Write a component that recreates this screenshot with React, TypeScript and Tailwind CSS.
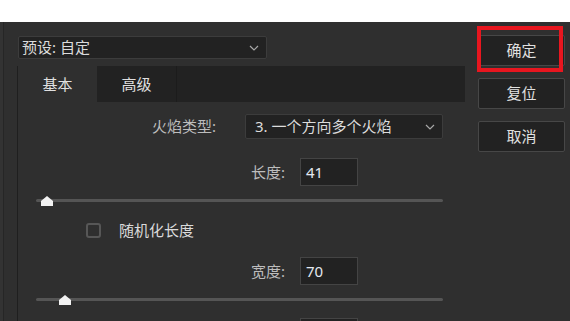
import { ReactNode } from "react";

const font = { fontFamily: '"Noto Sans", "Noto Sans CJK SC", sans-serif' };

function Chevron() {
  return (
    <svg width="10" height="6" viewBox="0 0 10 6" className="shrink-0">
      <polyline points="1,1 5,5 9,1" fill="none" stroke="#a8a8a8" strokeWidth="1.2" />
    </svg>
  );
}

function Select({ text, className, pad }: { text: string; className: string; pad: string }) {
  return (
    <div
      className={`flex items-center justify-between rounded-[2px] border border-[#3c3c3c] bg-[#222222] pr-[7px] text-[15px] text-[#dcdcdc] ${pad} ${className}`}
    >
      <span className="leading-none">{text}</span>
      <Chevron />
    </div>
  );
}

function NumberBox({ value }: { value: string }) {
  return (
    <div className="flex h-[28px] w-[58px] items-center border border-[#444444] bg-[#222222] pl-[5px] text-[15px] text-[#e2e8f0]">
      {value}
    </div>
  );
}

function Slider({ left }: { left: number }) {
  return (
    <div className="relative ml-[18px] h-[12px] w-[407px]">
      <div className="absolute left-0 right-0 top-[5px] h-[3px] rounded-full bg-[#555555]" />
      <svg
        width="12"
        height="10"
        viewBox="0 0 12 10"
        className="absolute top-[2px]"
        style={{ left }}
      >
        <polygon points="6,0 12,5 12,10 0,10 0,5" fill="#f2f2f2" />
      </svg>
    </div>
  );
}

function Row({ label, labelW, gap, children, className }: { label: string; labelW: string; gap: string; children: ReactNode; className: string }) {
  return (
    <div className={`flex items-center ${className}`}>
      <div className={`text-right text-[15px] text-[#bdbdbd] ${labelW} ${gap}`}>{label}</div>
      {children}
    </div>
  );
}

function Button({ text }: { text: string }) {
  return (
    <div className="flex h-[31px] items-center justify-center rounded-[2px] border border-[#474747] bg-[#222222] text-[15px] text-[#e0e0e0]">
      {text}
    </div>
  );
}

export default function App() {
  return (
    <div className="flex h-[321px] w-[570px] flex-col overflow-hidden bg-white" style={font}>
      <div className="h-[22px] shrink-0 bg-white" />
      <div className="flex flex-1 bg-[#2f2f2f]">
        {/* left edge */}
        <div className="w-[4px] shrink-0 border-r border-[#262626] bg-[#333333]" />

        {/* main column */}
        <div className="ml-[13px] flex w-[448px] shrink-0 flex-col">
          <Select text="预设: 自定" className="ml-[1px] mt-[14px] h-[23px] w-[249px]" pad="pl-[3px]" />

          <div className="mt-[7px] flex flex-1 flex-col border-l border-[#1f1f1f]">
            {/* tabs */}
            <div className="flex h-[36px] shrink-0 bg-[#222222] text-[15px] text-[#e0e0e0]">
              <div className="flex w-[79px] items-center justify-center bg-[#2f2f2f]">基本</div>
              <div className="flex w-[80px] items-center justify-center border-r border-[#1c1c1c]">高级</div>
              <div className="flex-1" />
            </div>

            <Row label="火焰类型:" labelW="w-[198px]" gap="mr-[29px]" className="mt-[12px]">
              <Select text="3. 一个方向多个火焰" className="h-[25px] w-[198px]" pad="pl-[9px]" />
            </Row>

            <Row label="长度:" labelW="w-[267px]" gap="mr-[15px]" className="mt-[19px]">
              <NumberBox value="41" />
            </Row>

            <div className="mt-[8px]">
              <Slider left={5} />
            </div>

            <div className="mt-[17px] flex items-center">
              <div className="ml-[68px] h-[15px] w-[15px] rounded-[3px] border-2 border-[#575757]" />
              <span className="ml-[18px] text-[15px] leading-none text-[#dadada]">随机化长度</span>
            </div>

            <Row label="宽度:" labelW="w-[267px]" gap="mr-[15px]" className="mt-[19px]">
              <NumberBox value="70" />
            </Row>

            <div className="mt-[8px]">
              <Slider left={23} />
            </div>

            <div className="mt-[13px] flex">
              <div className="ml-[282px]">
                <NumberBox value="" />
              </div>
            </div>
          </div>
        </div>

        {/* buttons */}
        <div className="relative ml-[13px] flex w-[87px] shrink-0 flex-col gap-[12px] pt-[13px]">
          <Button text="确定" />
          <Button text="复位" />
          <Button text="取消" />
          <div className="absolute left-[-1px] top-[4px] h-[46px] w-[86px] border-4 border-[#e8161f]" />
        </div>
      </div>
    </div>
  );
}
